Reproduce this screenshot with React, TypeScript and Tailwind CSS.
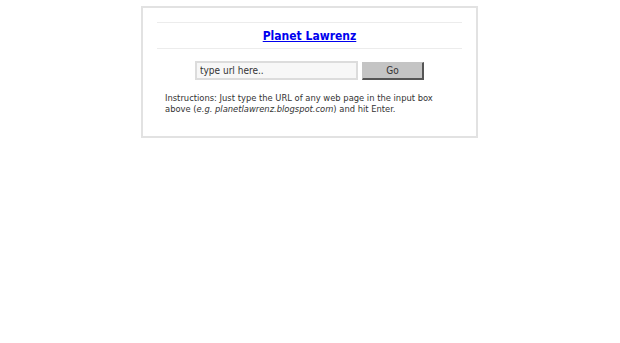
export default function App() {
  return (
    <div className="min-h-screen bg-white font-['DejaVu_Sans_Condensed','DejaVu_Sans',sans-serif]">
      <div className="ml-[141px] mt-[6px] w-[337px] border-2 border-[#e2e2e2] px-[14px] pt-[14px] pb-[22px]">
        <div className="border-y border-[#ececec] pt-[6px] pb-[5px] text-center text-[12px] leading-[14px]">
          <a href="#" className="font-bold text-[#0000ee] underline">
            Planet Lawrenz
          </a>
        </div>
        <div className="mt-[12px] flex items-center justify-center gap-[4px]">
          <input
            type="text"
            defaultValue="type url here.."
            className="h-[19px] w-[163px] border-2 border-[#dcdcdc] bg-[#f7f7f7] px-[3px] text-[10px] text-[#333] outline-none"
          />
          <button className="h-[18px] w-[62px] border border-b-2 border-r-2 border-[#c4c4c4] border-b-[#555] border-r-[#555] bg-[#c4c4c4] text-[10px] text-[#333]">
            Go
          </button>
        </div>
        <p className="mt-[12px] pl-[8px] text-[9.3px] leading-[11px] text-[#333]">
          Instructions: Just type the URL of any web page in the input box
          <br />
          above (<i>e.g. planetlawrenz.blogspot.com</i>) and hit Enter.
        </p>
      </div>
    </div>
  )
}
